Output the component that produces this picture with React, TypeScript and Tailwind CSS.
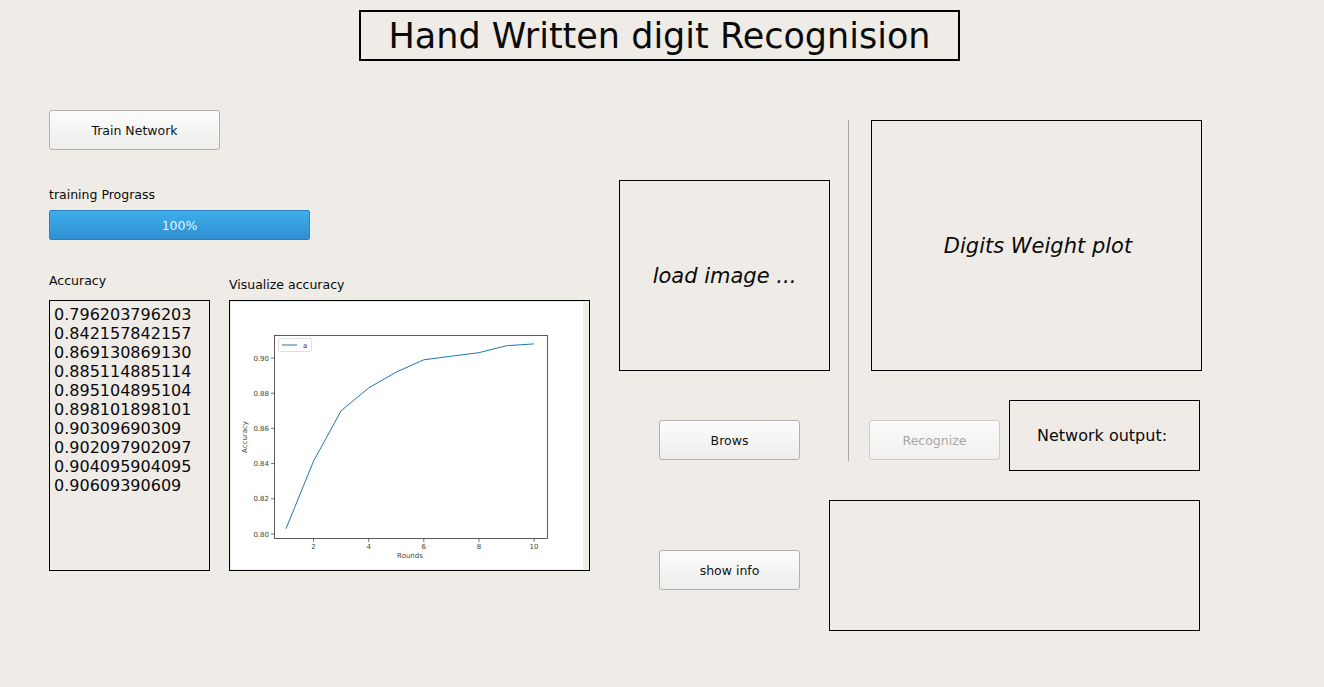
import React from 'react'

const accuracies = [
    '0.796203796203',
    '0.842157842157',
    '0.869130869130',
    '0.885114885114',
    '0.895104895104',
    '0.898101898101',
    '0.90309690309',
    '0.902097902097',
    '0.904095904095',
    '0.90609390609',
]

// plotted points (round, accuracy)
const points = [0.803, 0.8415, 0.87, 0.883, 0.892, 0.899, 0.901, 0.903, 0.907, 0.908]

const px = (r: number) => 56 + (r - 1) * 27.56
const py = (v: number) => 233 - (v - 0.8) * 1760

function QtButton({ label, disabled = false, className = '' }: { label: string; disabled?: boolean; className?: string }) {
    return (
        <div
            className={`flex items-center justify-center pt-[2px] rounded-[3px] border bg-gradient-to-b text-[12.5px] ${
                disabled
                    ? 'border-[#cfcbc8] from-[#fbfbfb] to-[#f1f0ef] text-[#a8a6a4]'
                    : 'border-[#b3b1ae] from-[#fcfcfc] to-[#ededec] text-[#111]'
            } ${className}`}
        >
            {label}
        </div>
    )
}

function AccuracyChart() {
    const line = points.map((v, i) => `${px(i + 1).toFixed(1)},${py(v).toFixed(1)}`).join(' ')
    const yTicks = [0.8, 0.82, 0.84, 0.86, 0.88, 0.9]
    const xTicks = [2, 4, 6, 8, 10]
    return (
        <svg width="359" height="269" viewBox="0 0 359 269" className="block">
            <rect x="1" y="1" width="352" height="267" fill="#ffffff" />
            <rect x="44.5" y="34.5" width="273" height="203" fill="none" stroke="#333" strokeWidth="0.8" />
            {yTicks.map((t) => (
                <g key={t}>
                    <line x1="41" x2="44.5" y1={py(t)} y2={py(t)} stroke="#333" strokeWidth="0.7" />
                    <text x="39" y={py(t) + 2.5} fontSize="7" textAnchor="end" fill="#444" fontFamily="DejaVu Sans, sans-serif">
                        {t.toFixed(2)}
                    </text>
                </g>
            ))}
            {xTicks.map((t) => (
                <g key={t}>
                    <line x1={px(t)} x2={px(t)} y1="237.5" y2="241" stroke="#333" strokeWidth="0.7" />
                    <text x={px(t)} y="248" fontSize="7" textAnchor="middle" fill="#444" fontFamily="DejaVu Sans, sans-serif">
                        {t}
                    </text>
                </g>
            ))}
            <text x="180" y="257" fontSize="7" textAnchor="middle" fill="#444" fontFamily="DejaVu Sans, sans-serif">
                Rounds
            </text>
            <text
                x="0"
                y="0"
                fontSize="7"
                textAnchor="middle"
                fill="#444"
                fontFamily="DejaVu Sans, sans-serif"
                transform="translate(17 136) rotate(-90)"
            >
                Accuracy
            </text>
            <polyline points={line} fill="none" stroke="#1f77b4" strokeWidth="1" />
            <rect x="48.5" y="37.5" width="33" height="13" rx="1.5" fill="#fff" stroke="#ccc" strokeWidth="0.6" />
            <line x1="52" x2="67" y1="44" y2="44" stroke="#1f77b4" strokeWidth="1" />
            <text x="73" y="46.5" fontSize="7" fill="#333" fontFamily="DejaVu Sans, sans-serif">
                a
            </text>
        </svg>
    )
}

export default function App() {
    return (
        <div className="w-[1324px] h-[687px] overflow-hidden bg-[#efebe7] text-[#0a0a0a] font-['DejaVu_Sans',sans-serif]">
            {/* Title */}
            <div className="ml-[359px] mt-[10px] w-[601px] h-[51px] pt-[2px] border-2 border-black flex items-center justify-center">
                <h1 className="text-[35px] leading-none">Hand Written digit Recognision</h1>
            </div>

            <div className="flex items-start">
                {/* Training side */}
                <div className="ml-[49px] w-[541px] flex flex-col">
                    <QtButton label="Train Network" className="mt-[49px] w-[171px] h-[40px]" />
                    <div className="mt-[37px] text-[12.5px] leading-4">training Prograss</div>
                    <div className="mt-[7px] w-[261px] h-[30px] pt-[2px] rounded-[2px] border border-[#2a7fc0] bg-gradient-to-b from-[#3eaeea] to-[#2f8fd2] flex items-center justify-center text-[12.5px] text-[#eaf4fc]">
                        100%
                    </div>
                    <div className="flex items-start">
                        <div className="flex flex-col">
                            <div className="mt-[33px] text-[12.5px] leading-4">Accuracy</div>
                            <div className="mt-[11px] w-[161px] h-[271px] border border-black pl-[4px] pt-[4px] text-[16px] leading-[19px]">
                                {accuracies.map((a, i) => (
                                    <div key={i}>{a}</div>
                                ))}
                            </div>
                        </div>
                        <div className="ml-[19px] flex flex-col">
                            <div className="mt-[37px] text-[12.5px] leading-4">Visualize accuracy</div>
                            <div className="mt-[7px] w-[361px] h-[271px] border border-black">
                                <AccuracyChart />
                            </div>
                        </div>
                    </div>
                </div>

                {/* Image loading */}
                <div className="ml-[29px] w-[211px] flex flex-col">
                    <div className="mt-[119px] h-[191px] pt-[2px] border border-black flex items-center justify-center">
                        <span className="italic text-[21px]">load image ...</span>
                    </div>
                    <QtButton label="Brows" className="mt-[49px] ml-[40px] w-[141px] h-[40px]" />
                    <QtButton label="show info" className="mt-[90px] ml-[40px] w-[141px] h-[40px]" />
                </div>

                {/* Separator */}
                <div className="ml-[18px] mt-[59px] w-px h-[341px] bg-[#aaa6a2]" />

                {/* Recognition */}
                <div className="ml-[22px] flex flex-col">
                    <div className="mt-[59px] w-[331px] h-[251px] pt-[2px] pl-[3px] border border-black flex items-center justify-center">
                        <span className="italic text-[21px]">Digits Weight plot</span>
                    </div>
                    <div className="mt-[29px] -ml-[2px] flex items-start">
                        <QtButton label="Recognize" disabled className="mt-[20px] w-[131px] h-[40px]" />
                        <div className="ml-[9px] w-[191px] h-[71px] border border-black flex items-center pl-[27px] text-[16px]">
                            Network output:
                        </div>
                    </div>
                    <div className="mt-[29px] -ml-[42px] w-[371px] h-[131px] border border-black" />
                </div>
            </div>
        </div>
    )
}
